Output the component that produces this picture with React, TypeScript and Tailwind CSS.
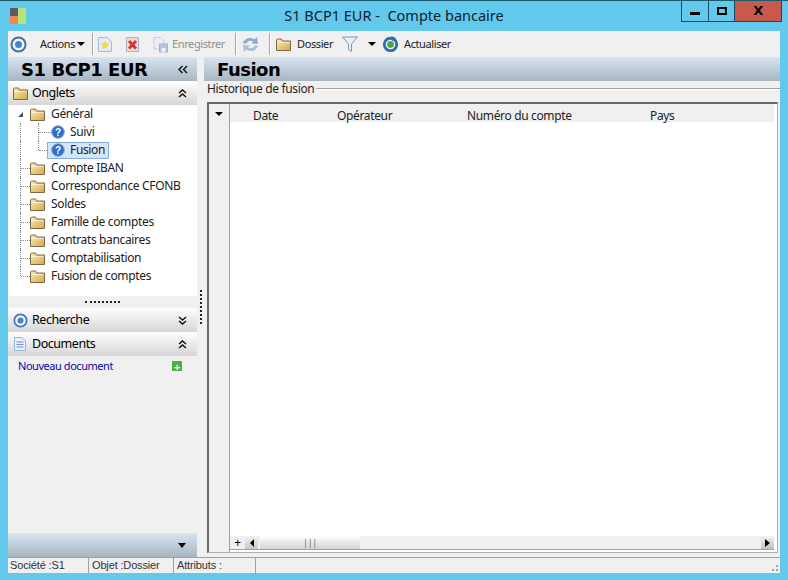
import {JSX} from 'react';

const folders = ['Compte IBAN', 'Correspondance CFONB', 'Soldes', 'Famille de comptes', 'Contrats bancaires', 'Comptabilisation', 'Fusion de comptes'];
const columns = [
  {label: 'Date', width: 'w-[84px]'},
  {label: 'Opérateur', width: 'w-[130px]'},
  {label: 'Numéro du compte', width: 'w-[183px]'},
  {label: 'Pays', width: 'w-[100px]'},
];

function FolderIcon(): JSX.Element {
  return (
    <svg width="15" height="13" viewBox="0 0 15 13" className="shrink-0">
      <defs>
        <linearGradient id="fold" x1="0" y1="0" x2="1" y2="1">
          <stop offset="0" stopColor="#fbeebc" />
          <stop offset="1" stopColor="#d6a645" />
        </linearGradient>
      </defs>
      <path d="M0.5 2 L0.5 12.5 L14.5 12.5 L14.5 3 L6.5 3 L5.5 1 L1.5 1 Z" fill="url(#fold)" stroke="#7d6a45" strokeWidth="1" />
      <path d="M1.5 4.5 L13.5 4.5" stroke="#fff" strokeWidth="1" opacity=".6" />
    </svg>
  );
}

function HelpIcon(): JSX.Element {
  return (
    <svg width="14" height="14" viewBox="0 0 14 14" className="shrink-0">
      <circle cx="7" cy="7" r="6.3" fill="#2f6fd0" stroke="#7ea7dd" />
      <text x="7" y="10.5" textAnchor="middle" fontSize="10" fontWeight="700" fill="#fff" fontFamily="'Liberation Sans', sans-serif">?</text>
    </svg>
  );
}

function TargetIcon({size}: {size: number}): JSX.Element {
  return (
    <svg width={size} height={size} viewBox="0 0 17 17" className="shrink-0">
      <circle cx="8.5" cy="8.5" r="7" fill="#f4f7fb" stroke="#3b73b8" strokeWidth="2" />
      <circle cx="8.5" cy="8.5" r="3.5" fill="#4a83c6" />
    </svg>
  );
}

function Chevrons({up}: {up: boolean}): JSX.Element {
  return (
    <svg width="9" height="9" viewBox="0 0 9 9" className="shrink-0">
      <path d={up ? 'M1 4 L4.5 1 L8 4 M1 8 L4.5 5 L8 8' : 'M1 1 L4.5 4 L8 1 M1 5 L4.5 8 L8 5'} fill="none" stroke="#111" strokeWidth="1.5" />
    </svg>
  );
}

function Caret({className}: {className?: string}): JSX.Element {
  return <span className={`inline-block h-0 w-0 border-x-[4px] border-t-[4px] border-x-transparent border-t-black ${className ?? ''}`} />;
}

function Separator(): JSX.Element {
  return <div className="mx-[3px] h-[22px] w-[2px] border-l border-[#a8a8a8] bg-white" />;
}

function AccordionHeader({label, icon, up}: {label: string; icon: JSX.Element; up: boolean}): JSX.Element {
  return (
    <div className="flex h-[24px] shrink-0 items-center bg-gradient-to-b from-white to-[#d6d6d6] pl-[5px] pr-[10px] text-[12.5px] tracking-[-0.45px] text-black">
      <div className="flex w-[19px] justify-start">{icon}</div>
      <span className="flex-1">{label}</span>
      <Chevrons up={up} />
    </div>
  );
}

function TreeRow({label, isLast}: {label: string; isLast: boolean}): JSX.Element {
  return (
    <div className="flex h-[18px] items-center">
      <div className={`ml-[12px] w-px self-stretch border-l border-dotted border-[#888] ${isLast ? 'mb-[9px]' : ''}`} />
      <div className="w-[9px] border-t border-dotted border-[#888]" />
      <FolderIcon />
      <span className="ml-[6px]">{label}</span>
    </div>
  );
}

export default function App(): JSX.Element {
  return (
    <div className="flex h-[580px] w-[788px] flex-col overflow-hidden border-t border-[#1c5a70] bg-[#62c9ec] font-['Noto_Sans','Open_Sans',sans-serif] text-[12px] tracking-[-0.35px] text-[#222]">
      {/* title bar */}
      <div className="relative flex h-[30px] shrink-0 items-center justify-center">
        <div className="absolute left-[10px] top-[7px] grid h-[16px] w-[16px] grid-cols-2">
          <div className="bg-[#5c5c5c]" />
          <div className="row-span-2 bg-[#b5e37a]" />
          <div className="bg-[#ee8a4e]" />
        </div>
        <span className="text-[14.5px] tracking-normal text-[#10222c] whitespace-pre">S1 BCP1 EUR -  Compte bancaire</span>
        <div className="absolute right-[6px] top-[-1px] flex h-[22px] border border-t-0 border-[#1c4a5c]">
          <div className="flex w-[27px] items-end justify-center border-r border-[#1c4a5c] pb-[6px]">
            <div className="h-[3px] w-[10px] bg-black" />
          </div>
          <div className="flex w-[26px] items-center justify-center border-r border-[#1c4a5c]">
            <div className="h-[8px] w-[10px] border-2 border-black" />
          </div>
          <div className="flex w-[46px] items-center justify-center bg-[#c75a4d] font-['DejaVu_Sans',sans-serif] text-[13px] font-bold text-black">X</div>
        </div>
      </div>

      <div className="mx-[8px] flex min-h-0 flex-1 flex-col bg-[#f0f0f0]">
        {/* toolbar */}
        <div className="flex h-[26px] shrink-0 items-center pl-[2px] text-[11px] tracking-[-0.4px]">
          <TargetIcon size={17} />
          <span className="ml-[13px]">Actions</span>
          <Caret className="ml-[2px]" />
          <div className="ml-[4px]"><Separator /></div>
          <svg width="16" height="17" viewBox="0 0 16 17" className="ml-[0px]">
            <path d="M1.5 1.5 H10 L14.5 5.5 V15.5 H1.5 Z" fill="#e4ebf8" stroke="#a9b8d2" />
            <path d="M8 4.5 L9.3 7.5 L12.5 7.8 L10.2 10 L10.9 13 L8 11.5 L5.1 13 L5.8 10 L3.5 7.8 L6.7 7.5 Z" fill="#f5d63c" />
          </svg>
          <svg width="15" height="17" viewBox="0 0 15 17" className="ml-[12px]">
            <path d="M1.5 1.5 H13.5 V15.5 H1.5 Z" fill="#f0d9dc" stroke="#a9b4cc" />
            <path d="M4 5 L11 12.5 M11 5 L4 12.5" stroke="#d8322a" strokeWidth="2.8" />
          </svg>
          <svg width="17" height="17" viewBox="0 0 17 17" className="ml-[12px]">
            <path d="M2 1.5 H9 L12 4.5 V13 H2 Z" fill="#eaeff6" stroke="#c3cedc" />
            <rect x="7.5" y="8" width="8" height="8" fill="#b7c4de" stroke="#a2b1cc" />
            <rect x="9.5" y="12" width="4" height="4" fill="#eef2f8" />
          </svg>
          <span className="ml-[3px] text-[#8f8f8f]">Enregistrer</span>
          <div className="ml-[7px]"><Separator /></div>
          <svg width="19" height="17" viewBox="0 0 19 17" className="ml-[1px]">
            <path d="M2 7.5 C3 2 10 0.5 13.5 3.5 L16 1 L17 8 L10 7.5 L12 5.5 C9.5 4 6.5 4.8 5.5 7.5 Z" fill="#8fadcc" />
            <path d="M17 9.5 C16 15 9 16.5 5.5 13.5 L3 16 L2 9 L9 9.5 L7 11.5 C9.5 13 12.5 12.2 13.5 9.5 Z" fill="#a9c0d8" />
          </svg>
          <div className="ml-[6px]"><Separator /></div>
          <div className="ml-[2px]"><FolderIcon /></div>
          <span className="ml-[6px]">Dossier</span>
          <svg width="16" height="18" viewBox="0 0 16 18" className="ml-[9px]">
            <path d="M0.5 2 H15.5 L9.5 9 V16.5 L6.5 14.5 V9 Z" fill="#e6eef6" stroke="#8098b0" />
          </svg>
          <Caret className="ml-[10px]" />
          <svg width="17" height="18" viewBox="0 0 18 18" className="ml-[6px]">
            <circle cx="9" cy="9.5" r="6.6" fill="#eef4fb" stroke="#2f6db0" strokeWidth="3" />
            <circle cx="9" cy="9.5" r="3.6" fill="#4da83f" />
            <path d="M10 0.5 L15 3 L11 6 Z" fill="#2f6db0" />
          </svg>
          <span className="ml-[5px]">Actualiser</span>
        </div>

        <div className="flex min-h-0 flex-1">
          {/* left pane */}
          <div className="flex w-[189px] shrink-0 flex-col">
            <div className="flex h-[24px] shrink-0 items-center bg-gradient-to-b from-[#d8e5f1] to-[#a8b5c2] pl-[13px] pr-[9px]">
              <span className="flex-1 font-['DejaVu_Sans',sans-serif] text-[18px] font-bold tracking-[-0.45px] text-black">S1 BCP1 EUR</span>
              <svg width="10" height="9" viewBox="0 0 10 9">
                <path d="M4.5 1 L1 4.5 L4.5 8 M9 1 L5.5 4.5 L9 8" fill="none" stroke="#111" strokeWidth="1.4" />
              </svg>
            </div>
            <AccordionHeader label="Onglets" icon={<FolderIcon />} up />
            <div className="flex h-[191px] shrink-0 flex-col bg-white">
              <div className="flex h-[18px] items-center">
                <span className="ml-[10px] h-0 w-0 border-b-[5px] border-l-[5px] border-b-[#555] border-l-transparent" />
                <div className="ml-[7px]"><FolderIcon /></div>
                <span className="ml-[6px]">Général</span>
              </div>
              <div className="flex h-[18px] items-center">
                <div className="ml-[12px] w-px self-stretch border-l border-dotted border-[#888]" />
                <div className="ml-[17px] w-px self-stretch border-l border-dotted border-[#888]" />
                <div className="w-[12px] border-t border-dotted border-[#888]" />
                <HelpIcon />
                <span className="ml-[5px]">Suivi</span>
              </div>
              <div className="flex h-[18px] items-center">
                <div className="ml-[12px] w-px self-stretch border-l border-dotted border-[#888]" />
                <div className="mb-[9px] ml-[17px] w-px self-stretch border-l border-dotted border-[#888]" />
                <div className="w-[8px] border-t border-dotted border-[#888]" />
                <div className="flex h-[17px] items-center border border-[#84acdd] bg-[#d5e6f9] pl-[3px] pr-[3px]">
                  <HelpIcon />
                  <span className="ml-[5px]">Fusion</span>
                </div>
              </div>
              {folders.map((folder, i) => (
                <TreeRow key={folder} label={folder} isLast={i === folders.length - 1} />
              ))}
            </div>
            <div className="flex h-[12px] shrink-0 items-center justify-center bg-[#f0f0f0]">
              <div className="mt-[-1px] w-[35px] border-t-2 border-dotted border-[#222]" />
            </div>
            <AccordionHeader label="Recherche" icon={<TargetIcon size={15} />} up={false} />
            <AccordionHeader
              label="Documents"
              up
              icon={
                <svg width="14" height="16" viewBox="0 0 14 16">
                  <path d="M1.5 1.5 H9 L12.5 5 V14.5 H1.5 Z" fill="#e9f0fb" stroke="#9db5d8" />
                  <path d="M3.5 6 H10.5 M3.5 8.5 H10.5 M3.5 11 H10.5" stroke="#6f93c8" />
                </svg>
              }
            />
            <div className="flex h-[20px] shrink-0 items-center justify-between pl-[10px] pr-[15px] text-[#0a0aa0]">
              <span className="text-[11px] tracking-[-0.45px]">Nouveau document</span>
              <div className="flex h-[10px] w-[10px] items-center justify-center bg-[#4fae48] text-[11px] font-bold leading-none text-white">+</div>
            </div>
            <div className="flex-1" />
            <div className="flex h-[24px] shrink-0 items-center justify-end bg-gradient-to-b from-[#d8e5f1] to-[#a8b5c2] pr-[11px]">
              <Caret className="border-x-[4px] border-t-[5px]" />
            </div>
          </div>

          {/* splitter */}
          <div className="flex w-[7px] shrink-0 items-start justify-center pt-[233px]">
            <div className="h-[34px] border-l-2 border-dotted border-[#222]" />
          </div>

          {/* right pane */}
          <div className="flex min-w-0 flex-1 flex-col">
            <div className="flex h-[24px] shrink-0 items-center bg-gradient-to-b from-[#d8e5f1] to-[#a8b5c2] pl-[13px]">
              <span className="font-['DejaVu_Sans',sans-serif] text-[18px] font-bold tracking-[-0.5px] text-black">Fusion</span>
            </div>
            <div className="flex h-[21px] shrink-0 items-center">
              <span className="ml-[3px] mt-[-6px] text-[12px]">Historique de fusion</span>
              <div className="ml-[2px] mt-[-6px] h-[2px] flex-1 border-t border-[#a0a0a0] bg-white" />
            </div>
            <div className="mb-[4px] ml-[3px] mr-[2px] flex min-h-0 flex-1 border border-t-2 border-l-2 border-[#b0b0b0] border-t-[#696969] border-l-[#696969] bg-white">
              <div className="flex w-[21px] shrink-0 flex-col border-r border-[#a0a0a0] bg-[#f0f0f0]">
                <div className="flex h-[18px] items-center justify-center pt-[1px]">
                  <Caret />
                </div>
              </div>
              <div className="mr-[3px] flex min-w-0 flex-1 flex-col pb-[2px]">
                <div className="flex h-[18px] shrink-0 bg-[#f0f0f0] pl-[23px] pt-[5px]">
                  {columns.map(col => (
                    <div key={col.label} className={`flex items-center ${col.width}`}>{col.label}</div>
                  ))}
                </div>
                <div className="flex-1" />
                <div className="flex h-[14px] shrink-0 items-center border-b border-[#a0a0a0] bg-[#f0f0f0]">
                  <div className="flex w-[15px] justify-center text-[12px] leading-none text-black">+</div>
                  <div className="flex h-[13px] w-[13px] items-center justify-center bg-gradient-to-b from-[#f4f4f4] to-[#c8c8c8]">
                    <span className="h-0 w-0 border-y-[4px] border-r-[4px] border-y-transparent border-r-black" />
                  </div>
                  <div className="ml-[2px] flex h-[13px] w-[100px] items-center justify-center bg-gradient-to-b from-white to-[#d4d4d4] text-[9px] leading-none text-[#666]">|||</div>
                  <div className="flex-1" />
                  <div className="flex h-[13px] w-[13px] items-center justify-center bg-gradient-to-b from-[#f4f4f4] to-[#c0c0c0]">
                    <span className="h-0 w-0 border-y-[4px] border-l-[5px] border-y-transparent border-l-black" />
                  </div>
                </div>
              </div>
            </div>
          </div>
        </div>

        {/* status bar */}
        <div className="relative flex h-[16px] shrink-0 items-center border-t border-[#a0a0a0] font-['Liberation_Sans',sans-serif] text-[11px] tracking-[-0.15px] text-[#333]">
          <div className="w-[81px] border-r border-[#a0a0a0] pl-[2px]">Société :S1</div>
          <div className="w-[85px] border-r border-[#a0a0a0] pl-[3px]">Objet :Dossier</div>
          <div className="w-[82px] border-r border-[#a0a0a0] pl-[3px]">Attributs :</div>
          <div className="absolute bottom-[2px] right-[2px] grid grid-cols-2 gap-[2px]">
            <span className="col-start-2 h-[2px] w-[2px] bg-[#a0a0a0]" />
            <span className="h-[2px] w-[2px] bg-[#a0a0a0]" />
            <span className="h-[2px] w-[2px] bg-[#a0a0a0]" />
          </div>
        </div>
      </div>
      <div className="h-[7px] shrink-0" />
    </div>
  );
}
